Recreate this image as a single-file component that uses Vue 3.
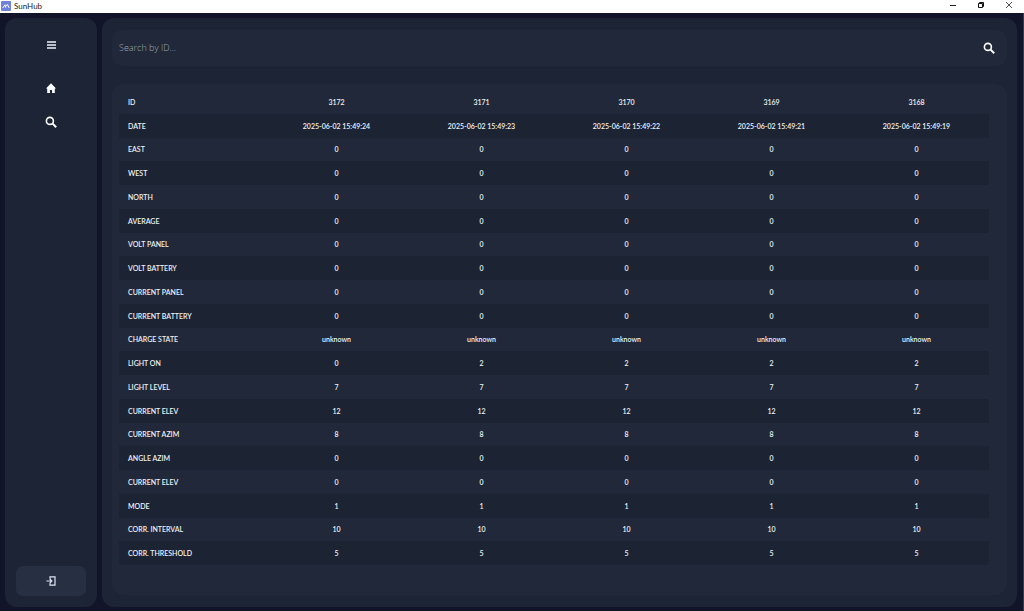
<script setup>
import { ref } from 'vue'

const query = ref('')
const same = (value) => Array(5).fill(value)

const ids = ['3172', '3171', '3170', '3169', '3168']
const rows = [
  { label: 'DATE', values: ['24', '23', '22', '21', '19'].map((s) => `2025-06-02 15:49:${s}`) },
  { label: 'EAST', values: same('0') },
  { label: 'WEST', values: same('0') },
  { label: 'NORTH', values: same('0') },
  { label: 'AVERAGE', values: same('0') },
  { label: 'VOLT PANEL', values: same('0') },
  { label: 'VOLT BATTERY', values: same('0') },
  { label: 'CURRENT PANEL', values: same('0') },
  { label: 'CURRENT BATTERY', values: same('0') },
  { label: 'CHARGE STATE', values: same('unknown') },
  { label: 'LIGHT ON', values: ['0', '2', '2', '2', '2'] },
  { label: 'LIGHT LEVEL', values: same('7') },
  { label: 'CURRENT ELEV', values: same('12') },
  { label: 'CURRENT AZIM', values: same('8') },
  { label: 'ANGLE AZIM', values: same('0') },
  { label: 'CURRENT ELEV', values: same('0') },
  { label: 'MODE', values: same('1') },
  { label: 'CORR. INTERVAL', values: same('10') },
  { label: 'CORR. THRESHOLD', values: same('5') },
]
</script>

<template>
  <div class="window">
    <header class="titlebar">
      <svg class="logo" viewBox="0 0 10 10" aria-hidden="true">
        <rect width="10" height="10" rx="1" fill="#6f7fdc" />
        <path d="M1.6 7 4 3.8 4.6 6.6M5 5.4 6.4 3.4 8.2 7" fill="none" stroke="#fff" stroke-width="1" />
      </svg>
      <span class="title">SunHub</span>
      <div class="controls">
        <button type="button" aria-label="Minimize">
          <svg viewBox="0 0 8 8"><path d="M1 4.5h6" stroke="#222" /></svg>
        </button>
        <button type="button" aria-label="Restore">
          <svg viewBox="0 0 8 8" fill="none" stroke="#111">
            <path d="M1.5 2.5h4v4h-4z" /><path d="M2.5 2.5v-1h4v4h-1" />
          </svg>
        </button>
        <button type="button" aria-label="Close">
          <svg viewBox="0 0 8 8"><path d="m1 1 6 6M7 1 1 7" stroke="#222" stroke-width=".8" /></svg>
        </button>
      </div>
    </header>

    <div class="body">
      <nav class="sidebar">
        <button type="button" class="nav menu" aria-label="Menu">
          <svg viewBox="0 0 12 12"><path d="M2 3h9M2 6h9M2 9h9" stroke="#eef2f7" stroke-width="1.4" /></svg>
        </button>
        <button type="button" class="nav" aria-label="Home">
          <svg viewBox="0 0 12 12"><path d="M6 1.2 11 6.5H9.8v4.6H7.1V8H4.9v3.1H2.2V6.5H1z" fill="#fff" /></svg>
        </button>
        <button type="button" class="nav" aria-label="Search">
          <svg viewBox="0 0 12 12" fill="none" stroke="#fff">
            <circle cx="4.9" cy="4.9" r="3.5" stroke-width="1.6" /><path d="m7.6 7.6 3.6 3.6" stroke-width="2" />
          </svg>
        </button>
        <button type="button" class="exit" aria-label="Log out">
          <svg viewBox="0 0 12 12" fill="none" stroke="#dfe5ee" stroke-width="1.2">
            <path d="M5 3.8V1.8h5v8.4H5V8.2M1.4 6h5.4M4.8 4 6.8 6 4.8 8" />
          </svg>
        </button>
      </nav>

      <main class="main">
        <form class="search" @submit.prevent>
          <input v-model="query" type="text" placeholder="Search by ID..." aria-label="Search by ID" />
          <button type="submit" aria-label="Search">
            <svg viewBox="0 0 12 12" fill="none" stroke="#fff">
              <circle cx="4.9" cy="4.9" r="3.5" stroke-width="1.6" /><path d="m7.6 7.6 3.6 3.6" stroke-width="2" />
            </svg>
          </button>
        </form>

        <section class="card">
          <table>
            <tbody>
              <tr>
                <th scope="row">ID</th>
                <th v-for="id in ids" :key="id" scope="col">{{ id }}</th>
              </tr>
              <tr v-for="(row, i) in rows" :key="i">
                <th scope="row">{{ row.label }}</th>
                <td v-for="(value, j) in row.values" :key="j">{{ value }}</td>
              </tr>
            </tbody>
          </table>
        </section>
      </main>
    </div>
  </div>
</template>

<style>
body {
  margin: 0;
  background: #12142a;
}
</style>

<style scoped>
.window {
  display: flex;
  flex-direction: column;
  min-height: 100vh;
  box-sizing: border-box;
  background: #12142a;
  font-family: Lato, "Open Sans", sans-serif;
}

button {
  display: flex;
  align-items: center;
  justify-content: center;
  padding: 0;
  border: 0;
  background: none;
  cursor: pointer;
}

.titlebar {
  display: flex;
  align-items: center;
  height: 13px;
  padding: 0 11px 0 1px;
  background: #fff;
}

.logo {
  width: 10px;
  height: 10px;
  margin-bottom: 2px;
}

.title {
  margin-left: 3px;
  padding-bottom: 1px;
  color: #222;
  font: 8px/12px Lato, sans-serif;
}

.controls {
  display: flex;
  gap: 20px;
  margin-left: auto;
  padding-bottom: 3px;
}

.controls svg {
  display: block;
  width: 8px;
  height: 8px;
}

.body {
  display: flex;
  flex: 1;
  gap: 5px;
  padding: 5px 6px 4px 5px;
  border-right: 1px solid #353a55;
}

.sidebar,
.main {
  display: flex;
  flex-direction: column;
  box-sizing: border-box;
  border-radius: 12px;
  background: #1c2435;
}

.sidebar {
  flex: 0 0 92px;
  gap: 10px;
  padding: 15px 11px 11px;
}

.nav {
  height: 24px;
}

.nav.menu {
  margin-bottom: 9px;
}

.nav svg,
.exit svg,
.search svg {
  width: 12px;
  height: 12px;
}

.exit {
  height: 30px;
  margin-top: auto;
  border-radius: 7px;
  background: #273043;
}

.main {
  flex: 1;
  min-width: 0;
  gap: 18px;
  padding: 12px 10px;
}

.search {
  display: flex;
  align-items: center;
  height: 36px;
  padding: 0 12px 0 7px;
  border-radius: 10px;
  background: #202839;
}

.search input {
  flex: 1;
  min-width: 0;
  padding: 0;
  border: 0;
  outline: 0;
  background: none;
  color: #e8edf4;
  font: 300 9px/12px "Open Sans", sans-serif;
}

.search input::placeholder {
  color: #a0a8b5;
  opacity: 1;
}

.card {
  display: flex;
  flex: 1;
  padding: 6px 18px 30px 7px;
  border-radius: 12px;
  background: #202839;
}

table {
  width: 100%;
  border-collapse: collapse;
  table-layout: fixed;
  color: #eef2f7;
  font-size: 7px;
  line-height: 12px;
}

th,
td {
  padding: 0;
  font-weight: 600;
  text-align: center;
}

th:first-child {
  padding-left: 9px;
  text-align: left;
}

tr:nth-child(even) {
  background: #1c2434;
}
</style>
